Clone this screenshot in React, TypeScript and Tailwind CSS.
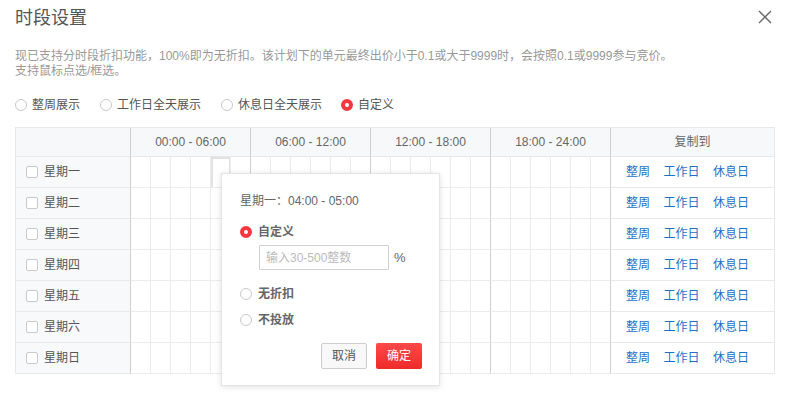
import React from "react";

const days = ["星期一", "星期二", "星期三", "星期四", "星期五", "星期六", "星期日"];
const groups = ["00:00 - 06:00", "06:00 - 12:00", "12:00 - 18:00", "18:00 - 24:00"];

function Radio({ checked }: { checked?: boolean }) {
  return checked ? (
    <span className="inline-block w-[12px] h-[12px] rounded-full border-[4px] border-[#f5383f] bg-white box-border shrink-0" />
  ) : (
    <span className="inline-block w-[12px] h-[12px] rounded-full border border-[#c9c9c9] bg-white box-border shrink-0" />
  );
}

export default function App() {
  return (
    <div className="relative w-[785px] h-[403px] bg-white overflow-hidden font-['Liberation_Sans','Noto_Sans_CJK_SC',sans-serif] text-[12px] text-[#555]">
      <div className="px-[15px]">
        <div className="pt-[6px] h-[30px] flex items-center justify-between">
          <div className="text-[18px] leading-[24px] text-[#555]">时段设置</div>
          <svg width="14" height="14" viewBox="0 0 14 14" className="mr-[-2px] mt-[-2px]">
            <path d="M1 1 L13 13 M13 1 L1 13" stroke="#666" strokeWidth="1.4" fill="none" />
          </svg>
        </div>
        <div className="mt-[19px] text-[#999] leading-[15px]">
          <div>现已支持分时段折扣功能，100%即为无折扣。该计划下的单元最终出价小于0.1或大于9999时，会按照0.1或9999参与竞价。</div>
          <div>支持鼠标点选/框选。</div>
        </div>
        <div className="mt-[18px] flex items-center gap-[20px] h-[16px] leading-[16px]">
          <label className="flex items-center gap-[5px]"><Radio />整周展示</label>
          <label className="flex items-center gap-[5px]"><Radio />工作日全天展示</label>
          <label className="flex items-center gap-[5px]"><Radio />休息日全天展示</label>
          <label className="flex items-center gap-[5px] ml-[-1px]"><Radio checked />自定义</label>
        </div>

        <div className="mt-[14px] w-[760px]">
          <div className="flex h-[30px] bg-[#f7f8fa] border-t border-[#e8e8e8] text-[#666]">
            <div className="w-[116px] box-border border-l border-r border-b border-l-[#e8e8e8] border-r-[#cfcfcf] border-b-[#e8e8e8]" />
            {groups.map((g) => (
              <div key={g} className="w-[120px] box-border border-r border-b border-r-[#cfcfcf] border-b-[#e8e8e8] flex items-center justify-center">
                {g}
              </div>
            ))}
            <div className="w-[164px] box-border border-r border-b border-[#e8e8e8] flex items-center justify-center">复制到</div>
          </div>
          {days.map((d, ri) => (
            <div key={d} className="flex h-[31px]">
              <div className="w-[116px] box-border bg-[#f8f9fb] border-l border-r border-b border-l-[#e8e8e8] border-r-[#cfcfcf] border-b-[#e8e8e8] flex items-center pl-[10px] gap-[6px]">
                <span className="w-[12px] h-[12px] rounded-[2px] border border-[#c9c9c9] bg-white box-border" />
                <span>{d}</span>
              </div>
              {Array.from({ length: 24 }).map((_, ci) => (
                <div
                  key={ci}
                  className={
                    "w-[20px] box-border border-b border-b-[#ececec] border-r " +
                    (ci % 6 === 5 ? "border-r-[#cfcfcf] " : "border-r-[#ececec] ") +
                    (ri === 0 && ci === 4 ? "shadow-[inset_2px_0_0_#e2e2e2,inset_0_2px_0_#e2e2e2,inset_-1px_0_0_#e2e2e2]" : "")
                  }
                />
              ))}
              <div className="w-[164px] box-border border-r border-b border-[#e8e8e8] flex items-center pl-[15px] gap-[13.5px] text-[#1f6fc6]">
                <span>整周</span>
                <span>工作日</span>
                <span>休息日</span>
              </div>
            </div>
          ))}
        </div>
      </div>

      <div className="absolute left-[221px] top-[173px] w-[219px] h-[213px] bg-white border border-[#e5e5e5] shadow-[0_1px_6px_rgba(0,0,0,0.12)] box-border pl-[18px] pt-[19px]">
        <div className="leading-[16px] text-[#666]">星期一：04:00 - 05:00</div>
        <div className="mt-[15px] flex items-center gap-[6px] h-[16px] font-bold text-[#666]">
          <Radio checked />
          <span>自定义</span>
        </div>
        <div className="mt-[5px] ml-[19px] flex items-center">
          <div className="w-[130px] h-[25px] border border-[#d0d0d0] box-border flex items-center pl-[6px] text-[#bbb] rounded-[1px]">
            输入30-500整数
          </div>
          <span className="ml-[5px] text-[13px] text-[#666]">%</span>
        </div>
        <div className="mt-[16px] flex items-center gap-[6px] h-[16px] font-bold text-[#666]">
          <Radio />
          <span>无折扣</span>
        </div>
        <div className="mt-[10px] flex items-center gap-[6px] h-[16px] font-bold text-[#666]">
          <Radio />
          <span>不投放</span>
        </div>
        <div className="mt-[15px] flex justify-end gap-[9px] pr-[17px]">
          <div className="w-[46px] h-[26px] box-border border border-[#ccc] bg-[#f8f8f8] rounded-[2px] flex items-center justify-center text-[#555]">取消</div>
          <div className="w-[46px] h-[26px] box-border bg-gradient-to-b from-[#ff4848] to-[#ee2a2a] rounded-[2px] flex items-center justify-center text-white">确定</div>
        </div>
      </div>
    </div>
  );
}
